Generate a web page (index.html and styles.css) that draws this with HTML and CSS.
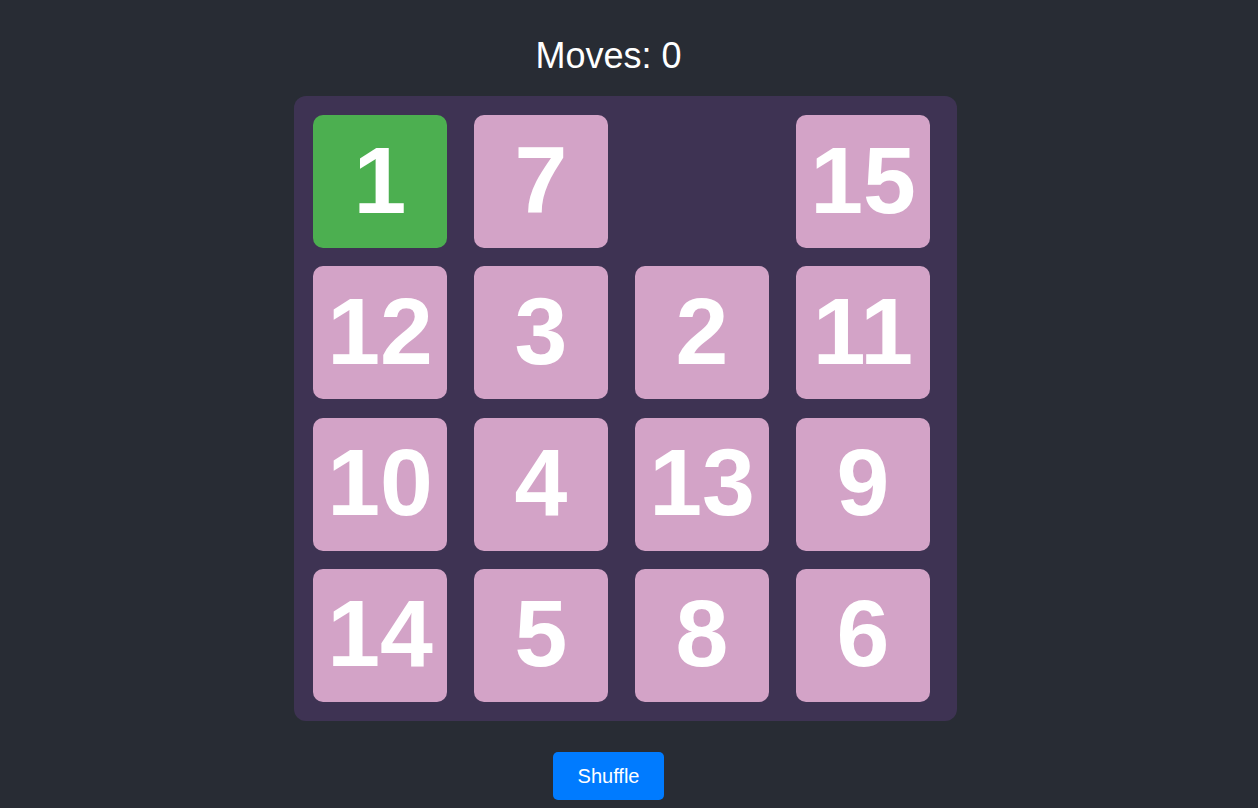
FILE: index.html
```html
<!DOCTYPE html>
<html lang="en">
<head>
<meta charset="utf-8">
<title>15 Puzzle</title>
<link rel="stylesheet" href="styles.css">
</head>
<body>
<div class="game">
  <h1 class="moves">Moves: 0</h1>
  <div class="board">
    <div class="cell"><div class="tile correct">1</div></div>
    <div class="cell"><div class="tile">7</div></div>
    <div class="cell"></div>
    <div class="cell"><div class="tile">15</div></div>
    <div class="cell"><div class="tile">12</div></div>
    <div class="cell"><div class="tile">3</div></div>
    <div class="cell"><div class="tile">2</div></div>
    <div class="cell"><div class="tile">11</div></div>
    <div class="cell"><div class="tile">10</div></div>
    <div class="cell"><div class="tile">4</div></div>
    <div class="cell"><div class="tile">13</div></div>
    <div class="cell"><div class="tile">9</div></div>
    <div class="cell"><div class="tile">14</div></div>
    <div class="cell"><div class="tile">5</div></div>
    <div class="cell"><div class="tile">8</div></div>
    <div class="cell"><div class="tile">6</div></div>
  </div>
  <button class="shuffle" type="button">Shuffle</button>
</div>
</body>
</html>
```

FILE: styles.css
```css
html, body {
  margin: 0;
  padding: 0;
  background: #282c34;
  height: 100%;
}
body {
  font-family: "Liberation Sans", Arial, sans-serif;
  color: #fff;
  overflow: hidden;
}
.game {
  width: 629px;
  margin-left: 294px;
  display: flex;
  flex-direction: column;
  align-items: center;
  padding-top: 36px;
}
.moves {
  margin: 0 0 20px 0;
  font-size: 36px;
  font-weight: normal;
  line-height: 40px;
}
.board {
  align-self: flex-start;
  box-sizing: border-box;
  width: 663px;
  height: 625px;
  padding: 19px 0 0 19px;
  background: #3e3353;
  border-radius: 12px;
  display: grid;
  grid-template-columns: repeat(4, 161px);
  grid-template-rows: repeat(4, 151.3px);
}
.cell {
  width: 134px;
  height: 133px;
}
.tile {
  width: 100%;
  height: 100%;
  background: #d3a3c7;
  border-radius: 10px;
  display: flex;
  align-items: center;
  justify-content: center;
  font-size: 95px;
  font-weight: bold;
  color: #fff;
  padding-bottom: 3px;
  box-sizing: border-box;
}
.tile.correct {
  background: #4caf50;
}
.shuffle {
  margin-top: 31px;
  width: 111px;
  height: 48px;
  background: #007bff;
  color: #fff;
  border: none;
  border-radius: 5px;
  font-family: "Liberation Sans", Arial, sans-serif;
  font-size: 20px;
  padding: 0;
}
```
